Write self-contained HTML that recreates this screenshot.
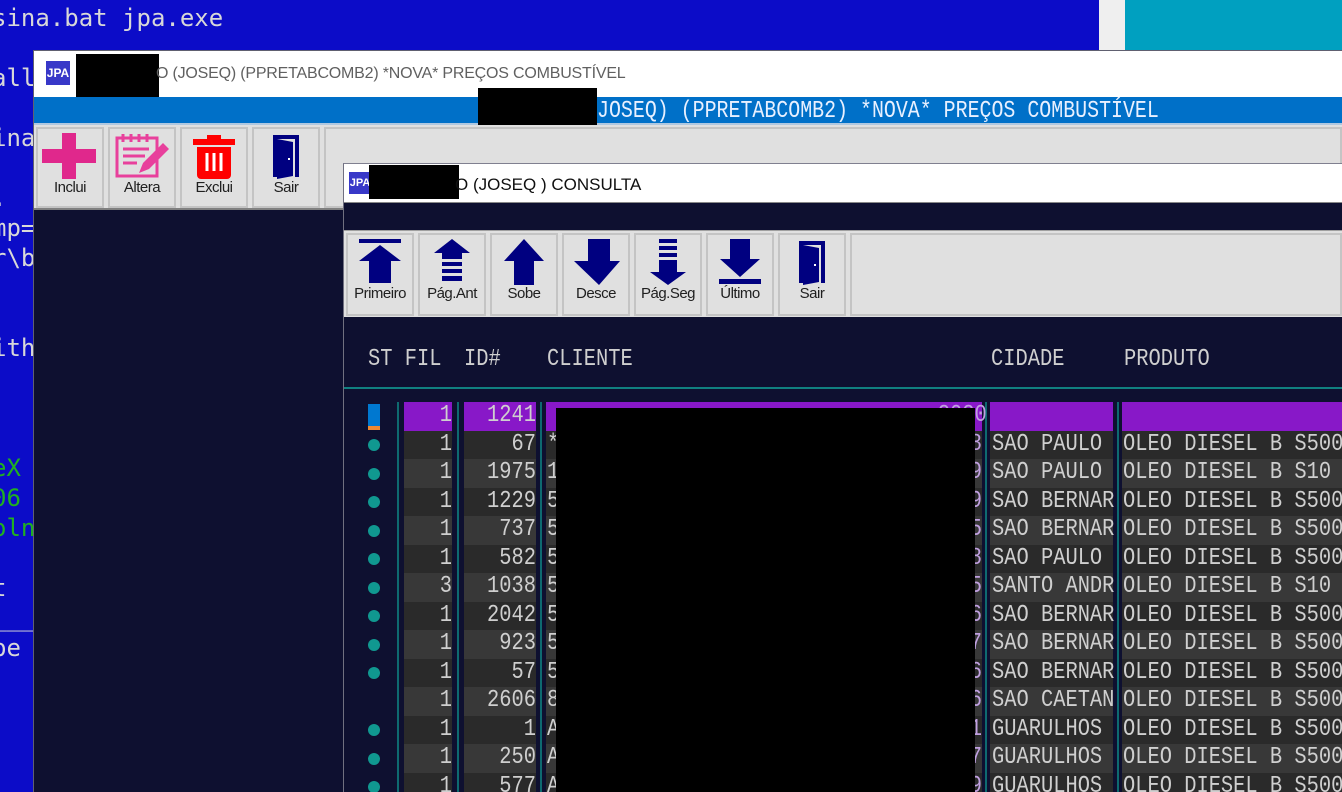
<!DOCTYPE html>
<html style="overflow:hidden;width:1342px;height:792px"><head><meta charset="utf-8"><style>
*{margin:0;padding:0;box-sizing:border-box}
body{width:1342px;height:792px;overflow:hidden;background:#0c0cc8;position:relative;font-family:"Liberation Sans",sans-serif}
.a{position:absolute}
.con{position:absolute;left:-8px;font:24px "DejaVu Sans Mono","Liberation Mono",monospace;color:#d8d8d8;white-space:pre;line-height:30px}
.m{position:absolute;font:24px "Liberation Mono",monospace;color:#cfcfcf;white-space:pre;line-height:28px;transform:scaleX(.85);transform-origin:left top}
.r{transform-origin:right top;text-align:right}
.btn{position:absolute;background:#e0e0e0;border:2px solid #c4c4c4;width:68px;text-align:center;font-size:15px;color:#202020;letter-spacing:-.5px}
.btn svg{display:block;margin:4px auto 0}
.btn span{position:absolute;left:0;right:0}
.smile{position:absolute;width:12px;height:12px;border-radius:50%;background:#109890}
</style></head><body>
<div class="con" style="top:3px">sina.bat jpa.exe</div>
<div class="con" style="top:63px">all</div>
<div class="con" style="top:123px">ina</div>
<div class="con" style="top:183px">.</div>
<div class="con" style="top:213px">mp=</div>
<div class="con" style="top:243px">r\b</div>
<div class="con" style="top:333px">ith</div>
<div class="con" style="top:453px;color:#20b020">eX</div>
<div class="con" style="top:483px;color:#20b020">06</div>
<div class="con" style="top:513px;color:#20b020">oln</div>
<div class="con" style="top:573px">t</div>
<div class="con" style="top:603px">___</div>
<div class="con" style="top:633px">pe</div>
<div class="a" style="left:1099px;top:0;width:26px;height:50px;background:#efefef"></div>
<div class="a" style="left:1125px;top:0;width:217px;height:50px;background:#00a0c0"></div>

<div class="a" style="left:33px;top:50px;width:1309px;height:742px;background:#0e1030;border-left:1px solid #606070;border-top:1px solid #606070"></div>
<div class="a" style="left:34px;top:51px;width:1308px;height:46px;background:#fff"></div>
<div class="a" style="left:46px;top:61px;width:24px;height:24px;background:#3838c8;color:#fff;font:bold 12px 'Liberation Sans';line-height:24px;text-align:center">JPA</div>
<div class="a" style="left:76px;top:54px;width:83px;height:49px;background:#000"></div>
<div class="a" style="left:156px;top:65px;font-size:16px;color:#606060;letter-spacing:-.2px">O (JOSEQ) (PPRETABCOMB2) *NOVA* PREÇOS COMBUSTÍVEL</div>
<div class="a" style="left:34px;top:97px;width:1308px;height:28px;background:#0070c8;border-bottom:2px solid #b0c8e0"></div>
<div class="m" style="left:597px;top:98px;color:#e8f0ff;transform:scaleX(.83)">JOSEQ) (PPRETABCOMB2) *NOVA* PREÇOS COMBUSTÍVEL</div>
<div class="a" style="left:478px;top:88px;width:119px;height:43px;background:#000"></div>
<div class="a" style="left:34px;top:125px;width:1308px;height:85px;background:#e0e0e0;border-bottom:2px solid #808080"></div>
<div class="a" style="left:324px;top:127px;width:1018px;height:81px;border:2px solid #c4c4c4"></div>
<div class="btn" style="left:36px;top:127px;height:81px"><svg width="62" height="46" viewBox="0 0 62 46"><path d="M23 0h14v16h20v14H37v16H23V30H3V16h20z" fill="#e0288c"/></svg><span style="top:50px">Inclui</span></div>
<div class="btn" style="left:108px;top:127px;height:81px"><svg width="62" height="46" viewBox="0 0 62 46"><rect x="6" y="5" width="40" height="38" fill="none" stroke="#e8409c" stroke-width="3"/><path d="M12 1v8M20 1v8M28 1v8M36 1v8M12 16h26M12 23h22M12 30h14" stroke="#e8409c" stroke-width="3"/><path d="M28 40l4-10 20-20 6 6-20 20z" fill="#e8409c"/></svg><span style="top:50px">Altera</span></div>
<div class="btn" style="left:180px;top:127px;height:81px"><svg width="62" height="46" viewBox="0 0 62 46"><path d="M24 2h14v4h14v6H10V6h14z" fill="#f00"/><path d="M14 14h34v28a4 4 0 0 1-4 4H18a4 4 0 0 1-4-4z" fill="#f00"/><path d="M24 20v18M31 20v18M38 20v18" stroke="#fff" stroke-width="3"/></svg><span style="top:50px">Exclui</span></div>
<div class="btn" style="left:252px;top:127px;height:81px"><svg width="62" height="46" viewBox="0 0 62 46"><path d="M18 2h26v42h-4V6H22v38h-4z" fill="#000080"/><path d="M22 6l16 3v34l-16 3z" fill="#000080"/><rect x="33" y="25" width="2" height="2" fill="#fff"/></svg><span style="top:50px">Sair</span></div>

<div class="a" style="left:343px;top:163px;width:999px;height:629px;background:#0e1030;border-left:1px solid #707080;border-top:1px solid #808090"></div>
<div class="a" style="left:344px;top:164px;width:998px;height:39px;background:#fff;border-bottom:1px solid #888"></div>
<div class="a" style="left:349px;top:172px;width:22px;height:22px;background:#3838c8;color:#fff;font:bold 11px 'Liberation Sans';line-height:22px;text-align:center">JPA</div>
<div class="a" style="left:369px;top:165px;width:90px;height:34px;background:#000"></div>
<div class="a" style="left:455px;top:175px;font-size:17px;color:#101010">O (JOSEQ ) CONSULTA</div>
<div class="a" style="left:344px;top:230px;width:998px;height:87px;background:#e0e0e0;border-top:1px solid #a0a0a0"></div>
<div class="a" style="left:850px;top:233px;width:492px;height:83px;border:2px solid #c4c4c4"></div>
<div class="btn" style="left:346px;top:233px;height:83px"><svg width="62" height="46" viewBox="0 0 62 46"><rect x="10" y="0" width="42" height="4" fill="#000080"/><path d="M31 6l21 16H42v22H20V22H10z" fill="#000080"/></svg><span style="top:50px">Primeiro</span></div>
<div class="btn" style="left:418px;top:233px;height:83px"><svg width="62" height="46" viewBox="0 0 62 46"><path d="M31 0l18 14H41v6H21v-6h-8z" fill="#000080"/><path d="M21 23h20v4H21zM21 30h20v4H21zM21 37h20v5H21z" fill="#000080"/></svg><span style="top:50px">Pág.Ant</span></div>
<div class="btn" style="left:490px;top:233px;height:83px"><svg width="62" height="46" viewBox="0 0 62 46"><path d="M31 0l20 22H41v24H21V22H11z" fill="#000080"/></svg><span style="top:50px">Sobe</span></div>
<div class="btn" style="left:562px;top:233px;height:83px"><svg width="62" height="46" viewBox="0 0 62 46"><path d="M20 0h22v22h10L31 46 6 22h14z" transform="translate(3 0)" fill="#000080"/></svg><span style="top:50px">Desce</span></div>
<div class="btn" style="left:634px;top:233px;height:83px"><svg width="62" height="46" viewBox="0 0 62 46"><path d="M22 0h18v4H22zM22 7h18v4H22zM22 14h18v4H22z" fill="#000080"/><path d="M22 21h18v12h9L31 46 13 33h9z" fill="#000080"/></svg><span style="top:50px">Pág.Seg</span></div>
<div class="btn" style="left:706px;top:233px;height:83px"><svg width="62" height="46" viewBox="0 0 62 46"><path d="M21 0h20v20h10L31 38 11 20h10z" fill="#000080"/><rect x="10" y="40" width="42" height="5" fill="#000080"/></svg><span style="top:50px">Último</span></div>
<div class="btn" style="left:778px;top:233px;height:83px"><svg width="62" height="46" viewBox="0 0 62 46"><path d="M18 2h26v42h-4V6H22v38h-4z" fill="#000080"/><path d="M22 6l16 3v34l-16 3z" fill="#000080"/><rect x="33" y="25" width="2" height="2" fill="#fff"/></svg><span style="top:50px">Sair</span></div>

<div class="m" style="left:368px;top:346px">ST FIL</div>
<div class="m" style="left:464px;top:346px">ID#</div>
<div class="m" style="left:547px;top:346px">CLIENTE</div>
<div class="m" style="left:991px;top:346px">CIDADE</div>
<div class="m" style="left:1124px;top:346px">PRODUTO</div>
<div class="a" style="left:344px;top:387px;width:998px;height:2px;background:#108080"></div>

<div class="a" style="left:404px;top:402px;width:938px;height:28.5px;background:#8818c8"></div>
<div class="a" style="left:404px;top:430.5px;width:938px;height:28.5px;background:#2a2a2a"></div>
<div class="a" style="left:404px;top:459px;width:938px;height:28.5px;background:#383838"></div>
<div class="a" style="left:404px;top:487.5px;width:938px;height:28.5px;background:#2a2a2a"></div>
<div class="a" style="left:404px;top:516px;width:938px;height:28.5px;background:#383838"></div>
<div class="a" style="left:404px;top:544.5px;width:938px;height:28.5px;background:#2a2a2a"></div>
<div class="a" style="left:404px;top:573px;width:938px;height:28.5px;background:#383838"></div>
<div class="a" style="left:404px;top:601.5px;width:938px;height:28.5px;background:#2a2a2a"></div>
<div class="a" style="left:404px;top:630px;width:938px;height:28.5px;background:#383838"></div>
<div class="a" style="left:404px;top:658.5px;width:938px;height:28.5px;background:#2a2a2a"></div>
<div class="a" style="left:404px;top:687px;width:938px;height:28.5px;background:#383838"></div>
<div class="a" style="left:404px;top:715.5px;width:938px;height:28.5px;background:#2a2a2a"></div>
<div class="a" style="left:404px;top:744px;width:938px;height:28.5px;background:#383838"></div>
<div class="a" style="left:404px;top:772.5px;width:938px;height:19.5px;background:#2a2a2a"></div>
<div class="a" style="left:452px;top:402px;width:12px;height:390px;background:#0e1030"></div>
<div class="a" style="left:536px;top:402px;width:10px;height:390px;background:#0e1030"></div>
<div class="a" style="left:982px;top:402px;width:8px;height:390px;background:#0e1030"></div>
<div class="a" style="left:1113px;top:402px;width:9px;height:390px;background:#0e1030"></div>
<div class="a" style="left:397px;top:402px;width:2px;height:390px;background:#0e6a70"></div>
<div class="a" style="left:457px;top:402px;width:2px;height:390px;background:#0e6a70"></div>
<div class="a" style="left:540px;top:402px;width:2px;height:390px;background:#0e6a70"></div>
<div class="a" style="left:985px;top:402px;width:2px;height:390px;background:#0e6a70"></div>
<div class="a" style="left:1117px;top:402px;width:2px;height:390px;background:#0e6a70"></div>

<div class="a" style="left:368px;top:404px;width:12px;height:22px;background:#0078d0"></div>
<div class="a" style="left:368px;top:426px;width:12px;height:4px;background:#f08830"></div>
<div class="smile" style="left:368px;top:439px"></div>
<div class="smile" style="left:368px;top:468px"></div>
<div class="smile" style="left:368px;top:496px"></div>
<div class="smile" style="left:368px;top:525px"></div>
<div class="smile" style="left:368px;top:553px"></div>
<div class="smile" style="left:368px;top:582px"></div>
<div class="smile" style="left:368px;top:610px"></div>
<div class="smile" style="left:368px;top:639px"></div>
<div class="smile" style="left:368px;top:667px"></div>
<div class="smile" style="left:368px;top:724px"></div>
<div class="smile" style="left:368px;top:753px"></div>
<div class="smile" style="left:368px;top:781px"></div>

<div class="m r" style="left:404px;width:48px;top:402px;line-height:28.5px">1
1
1
1
1
1
3
1
1
1
1
1
1
1</div>
<div class="m r" style="left:466px;width:70px;top:402px;line-height:28.5px">1241
67
1975
1229
737
582
1038
2042
923
57
2606
1
250
577</div>
<div class="m" style="left:547px;top:402px;line-height:28.5px"> 
*
1
5
5
5
5
5
5
5
8
A
A
A</div>
<div class="m" style="left:992px;top:402px;line-height:28.5px"> 
SAO PAULO
SAO PAULO
SAO BERNAR
SAO BERNAR
SAO PAULO
SANTO ANDR
SAO BERNAR
SAO BERNAR
SAO BERNAR
SAO CAETAN
GUARULHOS
GUARULHOS
GUARULHOS</div>
<div class="m" style="left:1123px;top:402px;line-height:28.5px"> 
OLEO DIESEL B S500
OLEO DIESEL B S10
OLEO DIESEL B S500
OLEO DIESEL B S500
OLEO DIESEL B S500
OLEO DIESEL B S10
OLEO DIESEL B S500
OLEO DIESEL B S500
OLEO DIESEL B S500
OLEO DIESEL B S500
OLEO DIESEL B S500
OLEO DIESEL B S500
OLEO DIESEL B S500</div>
<div class="m r" style="left:930px;width:52px;top:402px;line-height:28.5px;color:#c0a0e0">2020
8
9
9
5
8
5
6
7
6
6
1
7
9</div>
<div class="a" style="left:556px;top:408px;width:419px;height:384px;background:#000"></div>
</body></html>
